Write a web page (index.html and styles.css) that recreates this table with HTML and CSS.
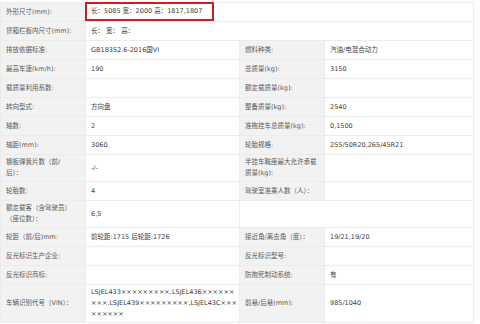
FILE: index.html
```html
<!DOCTYPE html>
<html lang="zh-CN">
<head>
<meta charset="utf-8">
<link rel="stylesheet" href="styles.css">
</head>
<body>
<table class="spec">
  <colgroup>
    <col class="c-label"><col class="c-value"><col class="c-label"><col class="c-value2">
  </colgroup>
  <tr>
    <td class="label">外形尺寸(mm):</td>
    <td class="value" colspan="3"><span class="highlight">长：5085 宽：2000 高：1817,1807</span></td>
  </tr>
  <tr>
    <td class="label">货箱栏板内尺寸(mm):</td>
    <td class="value" colspan="3">长：&nbsp;宽：&nbsp;高：</td>
  </tr>
  <tr>
    <td class="label">排放依据标准:</td>
    <td class="value">GB18352.6-2016国VI</td>
    <td class="label">燃料种类:</td>
    <td class="value">汽油/电混合动力</td>
  </tr>
  <tr>
    <td class="label">最高车速(km/h):</td>
    <td class="value">190</td>
    <td class="label">总质量(kg):</td>
    <td class="value">3150</td>
  </tr>
  <tr>
    <td class="label">载质量利用系数:</td>
    <td class="value"></td>
    <td class="label">额定载质量(kg):</td>
    <td class="value"></td>
  </tr>
  <tr>
    <td class="label">转向型式:</td>
    <td class="value">方向盘</td>
    <td class="label">整备质量(kg):</td>
    <td class="value">2540</td>
  </tr>
  <tr>
    <td class="label">轴数:</td>
    <td class="value">2</td>
    <td class="label">准拖挂车总质量(kg):</td>
    <td class="value">0,1500</td>
  </tr>
  <tr>
    <td class="label">轴距(mm):</td>
    <td class="value">3060</td>
    <td class="label">轮胎规格:</td>
    <td class="value">255/50R20,265/45R21</td>
  </tr>
  <tr>
    <td class="label">钢板弹簧片数（前/后）：</td>
    <td class="value">-/-</td>
    <td class="label">半挂车鞍座最大允许承载质量(kg):</td>
    <td class="value"></td>
  </tr>
  <tr>
    <td class="label">轮胎数:</td>
    <td class="value">4</td>
    <td class="label">驾驶室准乘人数（人）：</td>
    <td class="value"></td>
  </tr>
  <tr>
    <td class="label">额定载客（含驾驶员）（座位数）：</td>
    <td class="value">6,5</td>
    <td class="blank" colspan="2"></td>
  </tr>
  <tr>
    <td class="label">轮距（前/后)mm:</td>
    <td class="value">前轮距:1715 后轮距:1726</td>
    <td class="label">接近角/离去角（度）：</td>
    <td class="value">19/21,19/20</td>
  </tr>
  <tr>
    <td class="label">反光标识生产企业:</td>
    <td class="value"></td>
    <td class="label">反光标识型号:</td>
    <td class="value"></td>
  </tr>
  <tr>
    <td class="label">反光标识商标:</td>
    <td class="value"></td>
    <td class="label">防抱死制动系统:</td>
    <td class="value">有</td>
  </tr>
  <tr class="vin-row">
    <td class="label">车辆识别代号（VIN）：</td>
    <td class="value vin">LSJEL433×××××××××,LSJEL436×××××××××,LSJEL439×××××××××,LSJEL43C×××××××××</td>
    <td class="label">前悬/后悬(mm):</td>
    <td class="value">985/1040</td>
  </tr>
</table>
</body>
</html>
```

FILE: styles.css
```css
html, body {
  margin: 0;
  padding: 0;
  background: #ffffff;
}

body {
  font-family: "DejaVu Sans", "Noto Sans CJK SC", sans-serif;
  font-size: 6.5px;
}

.spec {
  margin-top: 2px;
  width: 473px;
  border-collapse: collapse;
  table-layout: fixed;
}

.c-label { width: 85px; }
.c-value { width: 154px; }
.c-value2 { width: 149px; }

.spec tr {
  height: 19px;
}

.spec td {
  border: 1px solid #ececec;
  padding: 2px 2px 2px 5px;
  line-height: 11px;
  vertical-align: middle;
}

.label {
  background: #f2f2f2;
  color: #5a5a5a;
  border-color: #fafafa;
  padding-right: 7px;
}

.spec td.label:first-child {
  padding-right: 12px;
}

.value {
  background: #ffffff;
  color: #3c3c3c;
}

.blank {
  background: #ffffff;
}

.highlight {
  display: inline-block;
  box-sizing: border-box;
  width: 129px;
  white-space: nowrap;
  margin: -4px 0 -4px -6px;
  padding: 2px 0 2px 4px;
  border: 2px solid #cf1b22;
  line-height: 11px;
  position: relative;
  top: -1px;
}

.vin {
  word-break: break-all;
  line-height: 9.5px;
  padding-top: 4px;
  padding-bottom: 4px;
  padding-right: 0;
}
```
